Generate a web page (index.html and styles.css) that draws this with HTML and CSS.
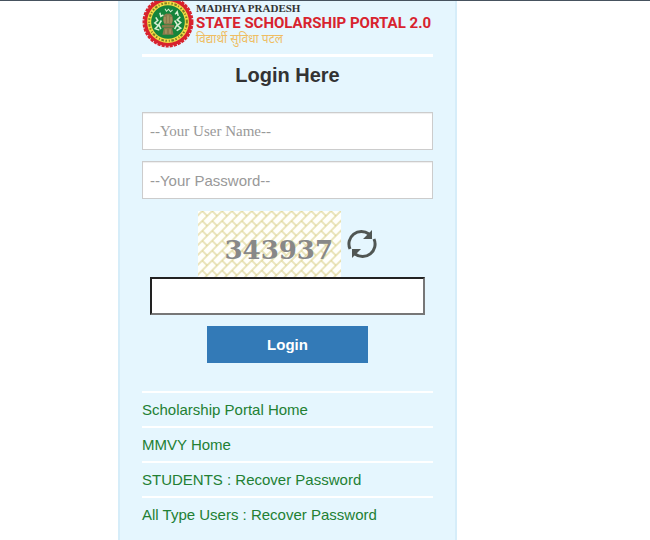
FILE: index.html
```html
<!DOCTYPE html>
<html lang="en">
<head>
  <meta charset="UTF-8">
  <meta name="viewport" content="width=device-width, initial-scale=1">
  <title>State Scholarship Portal 2.0</title>
  <link rel="stylesheet" href="styles.css">
</head>
<body>
  <main class="page">
    <div class="login-box">
      <header class="brand">
        <svg class="emblem" viewBox="0 0 102 102" aria-hidden="true">
          <circle cx="51" cy="51" r="47" fill="#d8232e"/>
          <circle cx="51" cy="51" r="47" fill="none" stroke="#d8232e" stroke-width="6" stroke-dasharray="6 2"/>
          <circle cx="51" cy="51" r="41" fill="#f3dc45"/>
          <circle cx="51" cy="51" r="37" fill="none" stroke="#7d8022" stroke-width="4" stroke-dasharray="3 3 5 3 2 4"/>
          <circle cx="51" cy="51" r="33" fill="#15843b"/>
          <g fill="none" stroke="#d9f0d3" stroke-width="3">
            <path d="M27 42l4 6-6 5 7 5-6 6 8 3M35 33l2 7 5-3M38 48l-5 8 4 9M65 36l4-5 2 8M75 41l-6 6 7 5-7 6 7 5-8 5M64 48l5 8-5 9"/>
            <path d="M45 25l3 5 4-4 4 5 4-4" stroke-width="2"/>
          </g>
          <g fill="#8a7a4c">
            <path d="M42 40q3-7 9-5 6-2 9 5l1 8-3 8H44l-3-8z"/>
            <rect x="39" y="57" width="24" height="5"/>
            <path d="M43 63h16l3 13H40z"/>
          </g>
          <path d="M45 41v12M51 38v15M57 41v12M47 65v9M55 65v9" stroke="#b5a26c" stroke-width="2"/>
        </svg>
        <div class="brand-text">
          <span class="state">MADHYA PRADESH</span>
          <span class="portal">STATE SCHOLARSHIP PORTAL 2.0</span>
          <span class="hindi" lang="hi">विद्यार्थी सुविधा पटल</span>
        </div>
      </header>

      <h1>Login Here</h1>

      <form class="login-form" action="#" method="post">
        <input class="field user" type="text" name="user" placeholder="--Your User Name--" aria-label="User Name">
        <input class="field" type="password" name="password" placeholder="--Your Password--" aria-label="Password">
        <div class="captcha">
          <div class="captcha-row">
            <div class="captcha-code">
              <svg class="weave" aria-hidden="true">
                <defs>
                  <pattern id="weave" width="14" height="14" patternUnits="userSpaceOnUse" patternTransform="rotate(-45)">
                    <path d="M0 3h14M0 10h14M3 3v7M10 10v4M10 0v3" fill="none" stroke="#d6cb80"/>
                  </pattern>
                </defs>
                <rect width="100%" height="100%" fill="url(#weave)"/>
              </svg>
              <span>343937</span>
            </div>
            <button class="refresh" type="button" aria-label="Refresh code">
              <svg viewBox="0 0 30 30" aria-hidden="true">
                <path d="M3 20A12.500 12.500 0 0 1 22 5M27 10A12.500 12.500 0 0 1 8 25" fill="none" stroke="#505653" stroke-width="3"/>
                <path d="M25 1v9h-9zM5 29v-9h9z" fill="#505653"/>
              </svg>
            </button>
          </div>
          <input class="captcha-input" type="text" name="captcha" aria-label="Code shown above">
        </div>
        <button class="login-button" type="submit">Login</button>
      </form>

      <nav class="links">
        <a href="#">Scholarship Portal Home</a>
        <a href="#">MMVY Home</a>
        <a href="#">STUDENTS : Recover Password</a>
        <a href="#">All Type Users : Recover Password</a>
      </nav>
    </div>
  </main>
</body>
</html>
```

FILE: styles.css
```css
* {
  box-sizing: border-box;
}
body {
  margin: 0;
  font-family: "Liberation Sans", Arial, sans-serif;
  font-size: 15px;
  color: #333;
  background: #fff;
}
.page {
  display: grid;
  grid-template-columns: 118fr minmax(0, 339fr) 193fr;
  min-height: 100vh;
  border-top: 1px solid #46525e;
}
.login-box {
  grid-column: 2;
  padding: 0 22px;
  background: #e5f6fe;
  border: solid #d6edf9;
  border-width: 0 2px;
}
.brand {
  display: flex;
  gap: 2px;
  height: 56px;
  overflow: hidden;
  border-bottom: 3px solid #fff;
}
.emblem {
  flex: none;
  width: 52px;
  height: 52px;
  margin-top: -5px;
}
.brand-text {
  display: flex;
  flex-direction: column;
  white-space: nowrap;
}
.state {
  font: bold 11px/14px "Liberation Serif", "Times New Roman", serif;
}
.portal {
  font: bold 15px/16px Roboto, Arial, sans-serif;
  color: #d8232e;
}
.hindi {
  font: 12px/16px "Noto Sans", "Noto Sans Devanagari", sans-serif;
  color: #efbd62;
}
h1 {
  margin: 0;
  padding: 6px 0 25px;
  font-size: 20px;
  line-height: 24px;
  text-align: center;
}
.login-form {
  display: flex;
  flex-direction: column;
  gap: 11px;
}
.field {
  width: 100%;
  height: 38px;
  padding: 0 7px;
  font: 15px "Liberation Sans", Arial, sans-serif;
  color: #555;
  background: #fff;
  border: 1px solid #ccc;
  box-shadow: inset 0 1px 1px #eee;
}
.field.user {
  font: 15px "Liberation Serif", Cambria, serif;
}
.field::placeholder {
  color: #999;
  opacity: 1;
}
.captcha {
  padding: 1px 8px 0;
}
.captcha-row {
  display: flex;
  align-items: center;
  justify-content: center;
  gap: 6px;
}
.captcha-code {
  display: grid;
  width: 143px;
  height: 66px;
  background: #fffffa;
}
.captcha-code > * {
  grid-area: 1 / 1;
}
.captcha-code span {
  justify-self: end;
  padding: 22px 8px 0 0;
  font: bold 26px/34px "DejaVu Serif", "Courier New", serif;
  color: #888;
}
.weave {
  width: 100%;
  height: 100%;
}
.refresh {
  width: 30px;
  height: 30px;
  padding: 0;
  background: none;
  border: 0;
  cursor: pointer;
}
.refresh svg {
  display: block;
}
.captcha-input {
  display: block;
  width: 100%;
  height: 38px;
  padding: 0 8px;
  font-size: 15px;
  background: #fff;
  border: 2px solid;
  border-color: #222 #777 #777 #222;
}
.login-button {
  align-self: center;
  width: 161px;
  height: 37px;
  font: bold 15px "Liberation Sans", Arial, sans-serif;
  color: #fff;
  background: #337ab7;
  border: 0;
  cursor: pointer;
}
.links {
  margin-top: 28px;
}
.links a {
  display: block;
  border-top: 2px solid #fff;
  line-height: 33px;
  color: #228033;
  text-decoration: none;
}
```
